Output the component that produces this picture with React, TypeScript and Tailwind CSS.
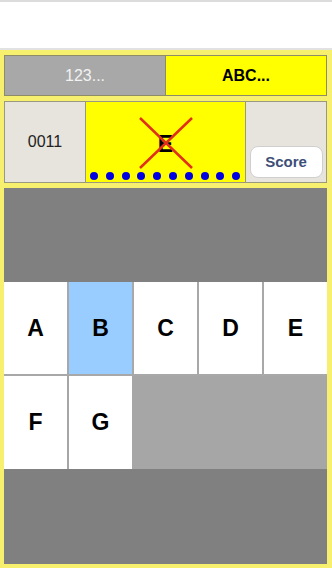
import React from "react";

const font = { fontFamily: '"Liberation Sans", Arial, sans-serif' };

export default function App() {
  const letters1 = ["A", "B", "C", "D", "E"];
  return (
    <div className="w-[332px] h-[568px] flex flex-col bg-white overflow-hidden" style={font}>
      <div className="h-[2px] bg-[#dcdcdc]" />
      <div className="h-[46px] bg-white" />
      <div className="h-[2px] bg-[#e2e2e2]" />
      <div className="flex-1 bg-[#f7f06e] pl-[4px] pr-[5px] pt-[5px] pb-[4px] flex flex-col">
        {/* tab row */}
        <div className="h-[41px] flex border-[1.5px] border-[#8e8c68]">
          <div className="flex-1 bg-[#a8a8a8] flex items-center justify-center text-[16px] text-[#f2f2f2] border-r-[1.5px] border-[#8e8c68]">
            123...
          </div>
          <div className="flex-1 bg-[#ffff00] flex items-center justify-center text-[16px] font-bold text-black">
            ABC...
          </div>
        </div>
        {/* second row */}
        <div className="mt-[5px] h-[82px] flex border-[1.5px] border-[#9a9880]">
          <div className="w-[80px] bg-[#e6e4dc] flex items-center justify-center text-[16px] text-[#222]">
            0011
          </div>
          <div className="flex-1 relative bg-[#ffff00] border-x-[1.5px] border-[#9a9880]">
            <div className="absolute inset-x-0 top-[31px] flex justify-center text-[23px] font-bold text-black leading-none">
              E
            </div>
            <svg className="absolute left-[52px] top-[15px]" width="56" height="52" viewBox="0 0 56 52">
              <line x1="2" y1="1" x2="54" y2="51" stroke="#e0301c" strokeWidth="2.5" />
              <line x1="54" y1="1" x2="2" y2="51" stroke="#e0301c" strokeWidth="2.5" />
            </svg>
            <div className="absolute left-[4px] bottom-[2px] flex gap-[7.8px]">
              {Array.from({ length: 10 }).map((_, i) => (
                <div key={i} className="w-[8px] h-[8px] rounded-full bg-[#0000e0]" />
              ))}
            </div>
          </div>
          <div className="w-[80px] bg-[#e6e4dc] flex flex-col justify-end items-center pb-[4px]">
            <div className="w-[73px] h-[32px] bg-white rounded-[8px] border border-[#cfcfcf] flex items-center justify-center text-[15px] font-bold text-[#3d4f78]">
              Score
            </div>
          </div>
        </div>
        {/* main area */}
        <div className="mt-[5px] flex-1 flex flex-col bg-[#808080]">
          <div className="h-[94px] bg-[#808080]" />
          <div className="h-[94px] grid grid-cols-5 gap-x-[2px] bg-[#a8a8a8] pb-[2px]">
            {letters1.map((l) => (
              <div
                key={l}
                className={`flex items-center justify-center text-[23px] font-bold text-black ${
                  l === "B" ? "bg-[#99ccff]" : "bg-white"
                }`}
              >
                {l}
              </div>
            ))}
          </div>
          <div className="h-[93px] grid grid-cols-5 gap-x-[2px] bg-[#a6a6a6]">
            {["F", "G"].map((l) => (
              <div key={l} className="bg-white flex items-center justify-center text-[23px] font-bold text-black">
                {l}
              </div>
            ))}
            <div className="col-span-3 bg-[#a6a6a6]" />
          </div>
          <div className="flex-1 bg-[#808080]" />
        </div>
      </div>
    </div>
  );
}
